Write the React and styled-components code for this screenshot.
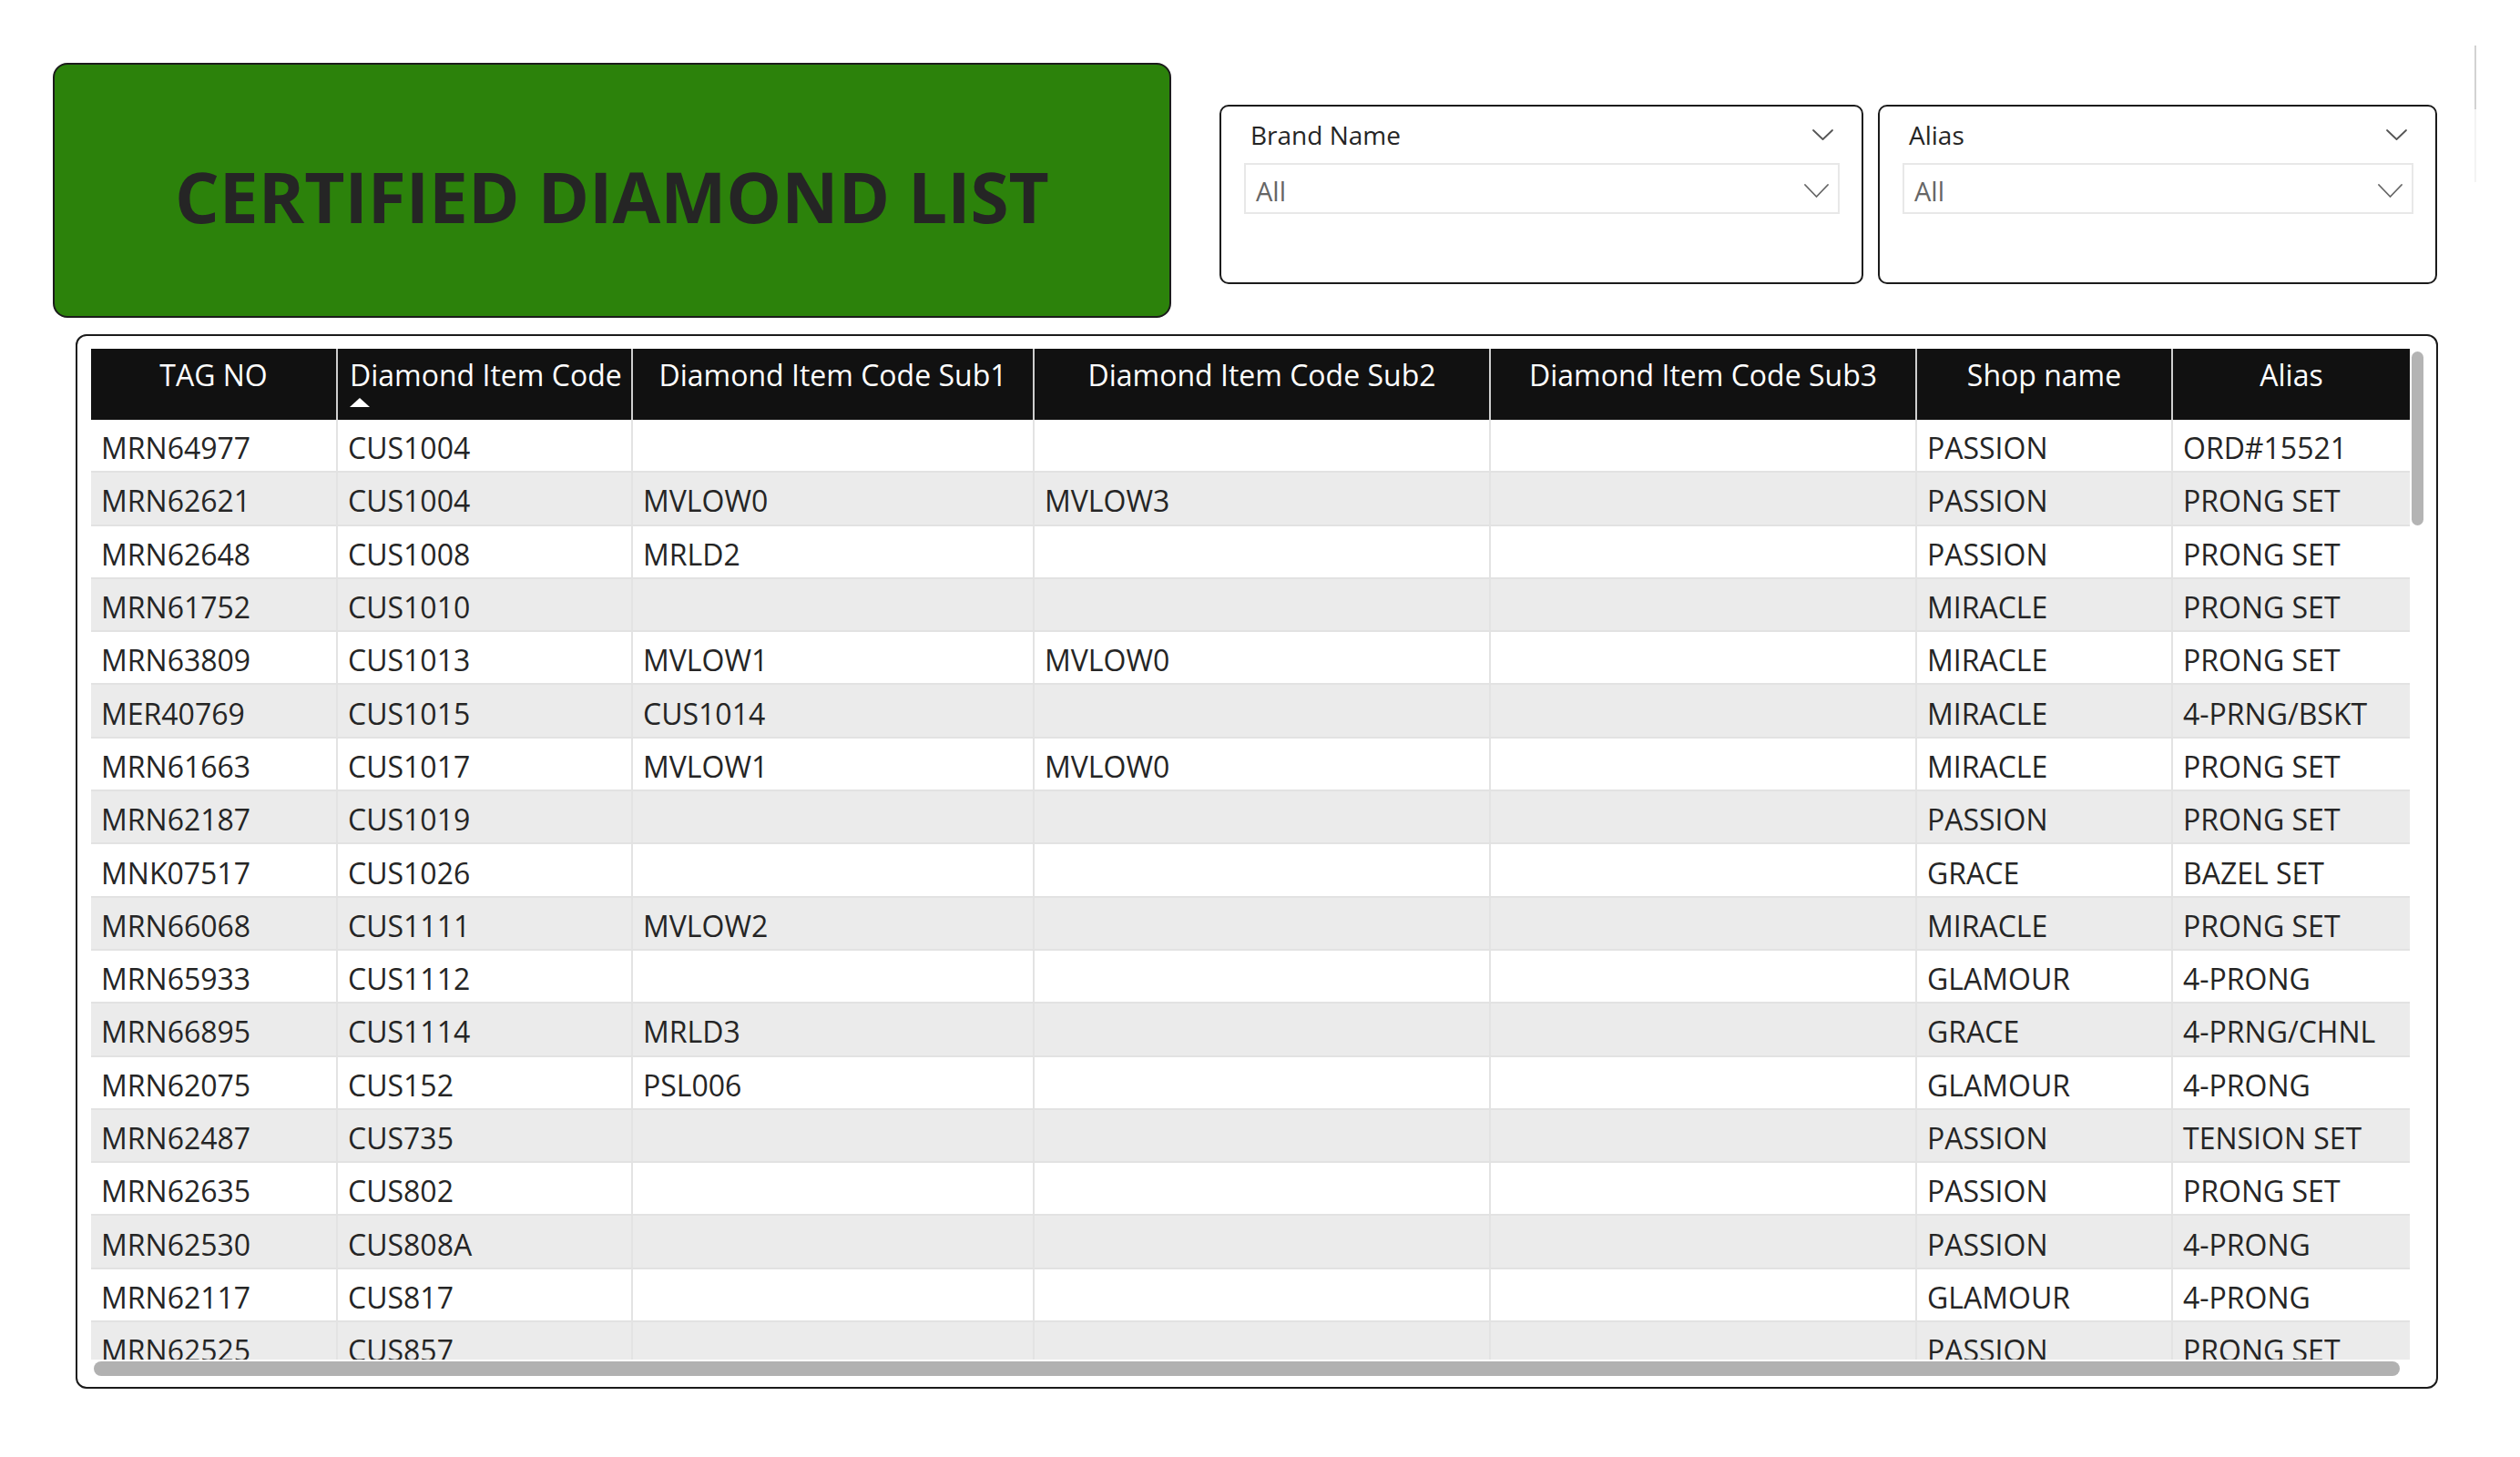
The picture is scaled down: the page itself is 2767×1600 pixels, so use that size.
import styled, { createGlobalStyle } from "styled-components";

const GlobalStyle = createGlobalStyle`
  html, body {
    margin: 0;
    padding: 0;
    background: #ffffff;
  }
  body {
    font-family: "Open Sans", "Noto Sans", "Liberation Sans", sans-serif;
    color: #252525;
  }
  * {
    box-sizing: border-box;
  }
`;

const columns = [
  { key: "tag", title: "TAG NO", width: 271 },
  { key: "code", title: "Diamond Item Code", width: 324, sorted: true },
  { key: "sub1", title: "Diamond Item Code Sub1", width: 441 },
  { key: "sub2", title: "Diamond Item Code Sub2", width: 501 },
  { key: "sub3", title: "Diamond Item Code Sub3", width: 468 },
  { key: "shop", title: "Shop name", width: 281 },
  { key: "alias", title: "Alias", width: 260 },
];

const rows = [
  ["MRN64977", "CUS1004", "", "", "", "PASSION", "ORD#15521"],
  ["MRN62621", "CUS1004", "MVLOW0", "MVLOW3", "", "PASSION", "PRONG SET"],
  ["MRN62648", "CUS1008", "MRLD2", "", "", "PASSION", "PRONG SET"],
  ["MRN61752", "CUS1010", "", "", "", "MIRACLE", "PRONG SET"],
  ["MRN63809", "CUS1013", "MVLOW1", "MVLOW0", "", "MIRACLE", "PRONG SET"],
  ["MER40769", "CUS1015", "CUS1014", "", "", "MIRACLE", "4-PRNG/BSKT"],
  ["MRN61663", "CUS1017", "MVLOW1", "MVLOW0", "", "MIRACLE", "PRONG SET"],
  ["MRN62187", "CUS1019", "", "", "", "PASSION", "PRONG SET"],
  ["MNK07517", "CUS1026", "", "", "", "GRACE", "BAZEL SET"],
  ["MRN66068", "CUS1111", "MVLOW2", "", "", "MIRACLE", "PRONG SET"],
  ["MRN65933", "CUS1112", "", "", "", "GLAMOUR", "4-PRONG"],
  ["MRN66895", "CUS1114", "MRLD3", "", "", "GRACE", "4-PRNG/CHNL"],
  ["MRN62075", "CUS152", "PSL006", "", "", "GLAMOUR", "4-PRONG"],
  ["MRN62487", "CUS735", "", "", "", "PASSION", "TENSION SET"],
  ["MRN62635", "CUS802", "", "", "", "PASSION", "PRONG SET"],
  ["MRN62530", "CUS808A", "", "", "", "PASSION", "4-PRONG"],
  ["MRN62117", "CUS817", "", "", "", "GLAMOUR", "4-PRONG"],
  ["MRN62525", "CUS857", "", "", "", "PASSION", "PRONG SET"],
];

const gridTemplate = columns.map((c) => `${c.width}px`).join(" ");

const Page = styled.div`
  width: 2767px;
  height: 1600px;
  padding-top: 50px;
  overflow: hidden;
`;

const TopRow = styled.div`
  display: flex;
  align-items: flex-start;
`;

const TitleCard = styled.div`
  margin: 19px 0 0 58px;
  width: 1228px;
  height: 280px;
  padding-top: 11px;
  background: #2c820b;
  border: 2px solid #1b1b1b;
  border-radius: 16px;
  display: flex;
  align-items: center;
  justify-content: center;
`;

const TitleText = styled.h1`
  margin: 0;
  font-size: 76.5px;
  font-weight: 700;
  color: #252525;
`;

const SlicerGroup = styled.div`
  display: flex;
  gap: 16px;
  margin: 65px 0 0 53px;
`;

const Slicer = styled.div`
  width: ${({ $w }) => $w}px;
  height: 197px;
  padding: 11px 24px 0 25px;
  border: 2px solid #1b1b1b;
  border-radius: 10px;
  background: #ffffff;
`;

const SlicerHeader = styled.div`
  display: flex;
  align-items: center;
  justify-content: space-between;
  height: 40px;
  padding: 0 7px;
  font-size: 28px;
  line-height: 40px;
  color: #252525;
`;

const Dropdown = styled.div`
  display: flex;
  align-items: center;
  justify-content: space-between;
  margin-top: 11px;
  height: 56px;
  padding: 5px 10px 0 11px;
  border: 2px solid #e8e8e8;
  font-size: 29px;
  color: #666666;
`;

const EdgeLine = styled.div`
  margin-left: 41px;
  width: 2px;
  height: 150px;
  background: linear-gradient(#d2d2d2 0 70px, #f3f3f3 70px);
`;

const TablePanel = styled.div`
  margin: 18px 0 0 83px;
  width: 2594px;
  height: 1158px;
  padding: 14px 14px 10px 15px;
  border: 2px solid #1b1b1b;
  border-radius: 12px;
  display: flex;
  flex-direction: column;
`;

const ScrollArea = styled.div`
  display: flex;
  height: 1110px;
`;

const Viewport = styled.div`
  width: 2546px;
  height: 100%;
  overflow: hidden;
`;

const VTrack = styled.div`
  margin-left: 2px;
  width: 13px;
`;

const VThumb = styled.div`
  margin-top: 3px;
  height: 191px;
  border-radius: 7px;
  background: #b4b4b4;
`;

const HThumb = styled.div`
  margin: 2px 0 0 3px;
  width: 2532px;
  height: 16px;
  border-radius: 8px;
  background: #b1b1b1;
`;

const HeaderRow = styled.div`
  display: grid;
  grid-template-columns: ${gridTemplate};
  height: 78px;
  background: #111111;
`;

const HeaderCell = styled.div`
  padding: ${({ $left }) => ($left ? "9px 0 0 13px" : "9px 6px 0")};
  border-right: ${({ $last }) => ($last ? "none" : "2px solid #cfcfcf")};
  font-size: 32px;
  line-height: 40px;
  color: #ffffff;
  text-align: ${({ $left }) => ($left ? "left" : "center")};
  white-space: nowrap;
  overflow: hidden;
`;

const SortArrow = styled.div`
  margin-top: 5px;
  width: 0;
  height: 0;
  border-left: 11px solid transparent;
  border-right: 11px solid transparent;
  border-bottom: 10px solid #ffffff;
`;

const BodyRow = styled.div`
  display: grid;
  grid-template-columns: ${gridTemplate};
  height: 58.3px;
  background: ${({ $alt }) => ($alt ? "#ebebeb" : "#ffffff")};
  border-bottom: 2px solid #e2e2e2;
`;

const Cell = styled.div`
  display: flex;
  align-items: center;
  padding: 5px 11px 0;
  border-right: ${({ $last }) => ($last ? "none" : "2px solid #e3e3e3")};
  font-size: 32px;
  color: #252525;
  white-space: nowrap;
  overflow: hidden;
`;

function Chevron({ w, h, color }) {
  return (
    <svg width={w} height={h} viewBox={`0 0 ${w} ${h}`} fill="none">
      <polyline
        points={`1,1 ${w / 2},${h - 1} ${w - 1},1`}
        stroke={color}
        strokeWidth="1.8"
        strokeLinecap="round"
        strokeLinejoin="round"
      />
    </svg>
  );
}

function SlicerBox({ label, width }) {
  return (
    <Slicer $w={width}>
      <SlicerHeader>
        <span>{label}</span>
        <Chevron w={23} h={12} color="#555555" />
      </SlicerHeader>
      <Dropdown>
        <span>All</span>
        <Chevron w={27} h={15} color="#666666" />
      </Dropdown>
    </Slicer>
  );
}

export default function App() {
  return (
    <Page>
      <GlobalStyle />
      <TopRow>
        <TitleCard>
          <TitleText>CERTIFIED DIAMOND LIST</TitleText>
        </TitleCard>
        <SlicerGroup>
          <SlicerBox label="Brand Name" width={707} />
          <SlicerBox label="Alias" width={614} />
        </SlicerGroup>
        <EdgeLine />
      </TopRow>

      <TablePanel>
        <ScrollArea>
          <Viewport>
            <HeaderRow>
              {columns.map((c, i) => (
                <HeaderCell key={c.key} $left={c.sorted} $last={i === columns.length - 1}>
                  {c.title}
                  {c.sorted && <SortArrow />}
                </HeaderCell>
              ))}
            </HeaderRow>
            {rows.map((r, ri) => (
              <BodyRow key={ri} $alt={ri % 2 === 1}>
                {r.map((v, ci) => (
                  <Cell key={ci} $last={ci === r.length - 1}>
                    {v}
                  </Cell>
                ))}
              </BodyRow>
            ))}
          </Viewport>
          <VTrack>
            <VThumb />
          </VTrack>
        </ScrollArea>
        <HThumb />
      </TablePanel>
    </Page>
  );
}
